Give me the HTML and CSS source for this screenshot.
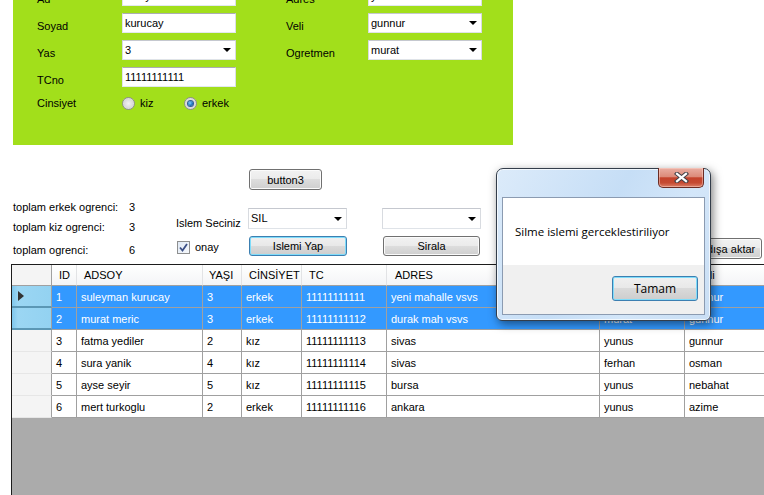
FILE: index.html
```html
<!DOCTYPE html>
<html lang="tr">
<head>
<meta charset="utf-8">
<title>Ogrenci Formu</title>
<link rel="stylesheet" href="styles.css">
</head>
<body>
<section class="panel">
  <div class="form">
    <span class="lbl l">Ad</span><div class="tb">suleyman</div><span class="lbl r">Adres</span><div class="tb">yeni mahalle vsvs</div>
    <span class="lbl l">Soyad</span><div class="tb">kurucay</div><span class="lbl r">Veli</span><div class="cb"><span>gunnur</span><i class="arrow"></i></div>
    <span class="lbl l">Yas</span><div class="cb"><span>3</span><i class="arrow"></i></div><span class="lbl r">Ogretmen</span><div class="cb"><span>murat</span><i class="arrow"></i></div>
    <span class="lbl l">TCno</span><div class="tb">11111111111</div>
    <span class="lbl l cins">Cinsiyet</span>
    <div class="radios">
      <span class="opt"><i class="radio"></i>kiz</span>
      <span class="opt"><i class="radio on"></i>erkek</span>
    </div>
  </div>
</section>

<section class="mid">
  <div class="stats">
    <span>toplam erkek ogrenci:</span><span>3</span>
    <span>toplam kiz ogrenci:</span><span>3</span>
    <span>toplam ogrenci:</span><span>6</span>
  </div>
  <div class="islem">
    <span class="islem-lbl">Islem Seciniz</span>
    <span class="chk-row"><i class="chk"><svg width="11" height="11" viewBox="0 0 11 11"><path d="M2 5.5 L4.5 8.5 L9 2" fill="none" stroke="#3b4f86" stroke-width="1.8"/></svg></i>onay</span>
  </div>
  <div class="colc">
    <div class="btn b3">button3</div>
    <div class="cb cmb"><span>SIL</span><i class="arrow"></i></div>
    <div class="btn focus byap">Islemi Yap</div>
  </div>
  <div class="cold">
    <div class="cb cmb"><span></span><i class="arrow"></i></div>
    <div class="btn bsira">Sirala</div>
  </div>
  <div class="cole">
    <div class="btn baktar">Excel'e dışa aktar</div>
  </div>
</section>

<section class="dgv">
  <div class="drow head">
    <div class="rh"></div><div>ID</div><div>ADSOY</div><div>YAŞI</div><div>CİNSİYET</div><div>TC</div><div>ADRES</div><div>Ogretmen</div><div>Veli</div>
  </div>
  <div class="drow sel">
    <div class="rh first"><i class="cur"></i></div><div>1</div><div>suleyman kurucay</div><div>3</div><div>erkek</div><div>11111111111</div><div>yeni mahalle vsvs</div><div>yunus</div><div>gunnur</div>
  </div>
  <div class="drow sel">
    <div class="rh"></div><div>2</div><div>murat meric</div><div>3</div><div>erkek</div><div>11111111112</div><div>durak mah vsvs</div><div>murat</div><div>gunnur</div>
  </div>
  <div class="drow">
    <div class="rh"></div><div>3</div><div>fatma yediler</div><div>2</div><div>kız</div><div>11111111113</div><div>sivas</div><div>yunus</div><div>gunnur</div>
  </div>
  <div class="drow">
    <div class="rh"></div><div>4</div><div>sura yanik</div><div>4</div><div>kız</div><div>11111111114</div><div>sivas</div><div>ferhan</div><div>osman</div>
  </div>
  <div class="drow">
    <div class="rh"></div><div>5</div><div>ayse seyir</div><div>5</div><div>kız</div><div>11111111115</div><div>bursa</div><div>yunus</div><div>nebahat</div>
  </div>
  <div class="drow">
    <div class="rh"></div><div>6</div><div>mert turkoglu</div><div>2</div><div>erkek</div><div>11111111116</div><div>ankara</div><div>yunus</div><div>azime</div>
  </div>
</section>

<div class="dlg">
  <div class="dlg-title">
    <div class="close"><svg width="15" height="11" viewBox="0 0 15 11"><path d="M3 1.8 L12 9.2 M12 1.8 L3 9.2" stroke="#3f3f46" stroke-width="4.2" stroke-linecap="square"/><path d="M3 1.8 L12 9.2 M12 1.8 L3 9.2" stroke="#ffffff" stroke-width="2.2" stroke-linecap="square"/></svg></div>
  </div>
  <div class="dlg-client">
    <div class="dlg-msg">Silme islemi gerceklestiriliyor</div>
    <div class="dlg-foot"><div class="btn focus tamam">Tamam</div></div>
  </div>
</div>
</body>
</html>
```

FILE: styles.css
```css
* { box-sizing: border-box; }
html, body { margin: 0; padding: 0; }
body {
  width: 764px;
  height: 495px;
  overflow: hidden;
  position: relative;
  background: #ffffff;
  font-family: "Liberation Sans", Arial, sans-serif;
  font-size: 11px;
  color: #000;
}
i { font-style: normal; }

/* green panel */
.panel {
  margin: -28px 0 0 13px;
  width: 500px;
  height: 173px;
  background: #a2df1b;
  padding: 14px 0 0 24px;
  overflow: hidden;
}
.form {
  display: grid;
  grid-template-columns: 85px 114px 50px 82px 114px;
  grid-auto-rows: 20px;
  row-gap: 7px;
}
.lbl { padding-top: 7px; line-height: 13px; white-space: nowrap; }
.lbl.l { grid-column: 1; }
.lbl.r { grid-column: 4; }
.lbl.cins { padding-top: 3px; }
.tb, .cb {
  height: 20px;
  background: #fff;
  border: 1px solid #abadb3;
  border-color: #abadb3 #dbdfe6 #e3e9ef #e2e3ea;
  padding: 2px 0 0 2px;
  line-height: 14px;
  white-space: nowrap;
  overflow: hidden;
}
.cb {
  display: flex;
  justify-content: space-between;
  align-items: flex-start;
  padding-right: 4px;
  border-color: #c5c8cf #d8dbe0 #dfe3e8 #d8dbe0;
}
.arrow {
  margin-top: 5px;
  width: 0; height: 0;
  border-left: 4px solid transparent;
  border-right: 4px solid transparent;
  border-top: 4px solid #000;
}
.radios {
  grid-column: 2 / span 3;
  display: flex;
  align-items: center;
  padding-bottom: 2px;
}
.opt { display: flex; align-items: center; gap: 5px; width: 62px; }
.radio {
  width: 13px; height: 13px;
  border-radius: 50%;
  border: 1px solid #8e8f8f;
  background: radial-gradient(circle at 50% 50%, #f2f2f2 0%, #d9d9d9 60%, #f4f4f4 100%);
  display: flex; align-items: center; justify-content: center;
}
.radio.on::after {
  content: "";
  width: 5px; height: 5px;
  border-radius: 50%;
  background: radial-gradient(circle at 40% 40%, #7fd0ff 0%, #1a6fb8 60%, #0b3b75 100%);
  box-shadow: 0 0 0 1px #2d5f94;
}

/* middle controls */
.mid { display: flex; height: 119px; padding-left: 13px; }
.stats {
  width: 163px;
  padding-top: 56px;
  display: grid;
  grid-template-columns: 116px auto;
  grid-template-rows: 20px 23px 13px;
  line-height: 13px;
  align-content: start;
}
.islem { width: 72px; padding-top: 72px; display: flex; flex-direction: column; line-height: 13px; }
.chk-row { display: flex; align-items: center; gap: 5px; margin-top: 11px; margin-left: 1px; }
.chk {
  width: 13px; height: 13px;
  border: 1px solid #8e8f8f;
  background: linear-gradient(135deg, #dfe9f5, #f6f8fb);
  display: flex; align-items: center; justify-content: center;
}
.colc { width: 134px; padding-top: 24px; display: flex; flex-direction: column; }
.cold { width: 120px; padding-top: 63px; display: flex; flex-direction: column; }
.cole { flex: 1; padding-top: 93px; display: flex; justify-content: flex-end; padding-right: 2px; }
.cmb { width: 99px; height: 21px; padding-top: 2px; }
.cmb .arrow { margin-top: 6px; }

.btn {
  border: 1px solid #707070;
  border-radius: 3px;
  background: linear-gradient(#f2f2f2 0%, #ebebeb 49%, #dddddd 50%, #cfcfcf 100%);
  box-shadow: inset 0 0 0 1px #fbfbfb;
  display: flex; align-items: center; justify-content: center;
  white-space: nowrap;
}
.btn.focus {
  border-color: #3c7fb1;
  box-shadow: inset 0 0 0 1px #7fdcfa;
  background: linear-gradient(#f0f0f0 0%, #e8e8e8 49%, #dadada 50%, #cdcdcd 100%);
}
.b3 { width: 73px; height: 21px; margin-left: 1px; }
.colc .cmb { margin-top: 18px; }
.byap { width: 98px; height: 20px; margin-left: 1px; margin-top: 7px; }
.bsira { width: 97px; height: 20px; margin-left: 1px; margin-top: 7px; }
.baktar { width: 100px; height: 21px; }

/* data grid */
.dgv {
  margin-left: 11px;
  width: 800px;
  height: 231px;
  border-left: 1px solid #1c1c1c;
  border-top: 1px solid #1c1c1c;
  background: #ababab;
}
.drow {
  display: grid;
  grid-template-columns: 40px 25px 126px 39px 60px 85px 213px 85px 127px;
  height: 22px;
  background: #fff;
}
.drow > div {
  border-right: 1px solid #a0a0a0;
  border-bottom: 1px solid #a0a0a0;
  padding-left: 4px;
  display: flex; align-items: center;
  white-space: nowrap;
  overflow: hidden;
}
.drow.head { height: 21px; background: linear-gradient(#ffffff, #f3f4f6); }
.drow.head > div {
  padding-left: 7px;
  border-right: 1px solid #e2e3e5;
  border-bottom: 1px solid #a0a0a0;
}
.drow.head > div:nth-child(4) { padding-left: 6px; }
.drow.head > div:nth-child(7) { padding-left: 8px; }
.drow.head > div:last-child { padding-left: 12px; }
.drow > .rh {
  background: #f4f4f4;
  border-right: 1px solid #a0a0a0;
  border-bottom: 1px solid #e6e6e6;
  padding-left: 6px;
}
.drow.head > .rh { border-right: 1px solid #a0a0a0; background: #f4f4f4; }
.drow.sel > div { background: #3399ff; color: #fff; }
.drow.sel > .rh {
  background: linear-gradient(90deg, #7ec6ec 0%, #9bd6f3 15%, #93d2f1 100%);
  border-bottom: 2px solid #5b97b5;
}
.cur {
  width: 0; height: 0;
  border-top: 5px solid transparent;
  border-bottom: 5px solid transparent;
  border-left: 6px solid #333;
}

/* message box */
.dlg {
  position: absolute;
  left: 496px;
  top: 168px;
  width: 215px;
  height: 153px;
  border: 1px solid #333d4a;
  border-radius: 7px 7px 6px 6px;
  background: linear-gradient(120deg, #dcebfa 0%, #c6def6 45%, #d3e6f9 70%, #c9def4 100%);
  box-shadow: inset 0 0 0 1px rgba(255,255,255,0.7), 2px 3px 10px rgba(0,0,0,0.5);
  padding: 0 5px 5px 5px;
  font-family: "Open Sans", "Liberation Sans", sans-serif;
  font-size: 11.5px;
}
.dlg-title { height: 28px; display: flex; justify-content: flex-end; align-items: flex-start; }
.close {
  margin-top: -1px;
  margin-right: 1px;
  width: 46px; height: 20px;
  border: 1px solid #6b2c24;
  border-top: none;
  border-radius: 0 0 5px 5px;
  background: linear-gradient(#e9aea2 0%, #dc8b7a 45%, #c4432c 52%, #c54a32 78%, #dc8069 100%);
  box-shadow: inset 0 0 0 1px rgba(255,220,210,0.45);
  display: flex; align-items: center; justify-content: center;
}
.dlg-client {
  height: 118px;
  border: 1px solid #8b9bb1;
  background: #f0f0f0;
  display: flex; flex-direction: column;
}
.dlg-msg {
  height: 67px;
  background: #fff;
  padding-left: 12px;
  display: flex; align-items: center;
  color: #000;
}
.dlg-foot { flex: 1; padding: 11px 6px 0 0; display: flex; justify-content: flex-end; align-items: flex-start; }
.tamam { width: 86px; height: 25px; font-size: 12px; }
```
